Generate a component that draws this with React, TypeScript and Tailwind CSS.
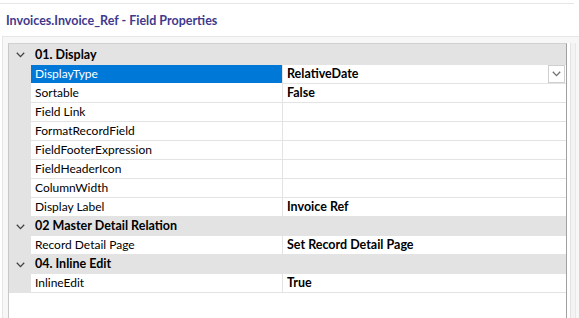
// Field properties grid for the Invoice_Ref field

const font = { fontFamily: 'Lato, "Noto Sans", sans-serif' };

type Item = { name: string; value?: string; selected?: boolean; dropdown?: boolean };
type Group = { title: string; items: Item[] };

const groups: Group[] = [
  {
    title: '01. Display',
    items: [
      { name: 'DisplayType', value: 'RelativeDate', selected: true, dropdown: true },
      { name: 'Sortable', value: 'False' },
      { name: 'Field Link' },
      { name: 'FormatRecordField' },
      { name: 'FieldFooterExpression' },
      { name: 'FieldHeaderIcon' },
      { name: 'ColumnWidth' },
      { name: 'Display Label', value: 'Invoice Ref' },
    ],
  },
  {
    title: '02 Master Detail Relation',
    items: [{ name: 'Record Detail Page', value: 'Set Record Detail Page' }],
  },
  {
    title: '04. Inline Edit',
    items: [{ name: 'InlineEdit', value: 'True' }],
  },
];

function Chevron({ className }: { className?: string }) {
  return (
    <svg width="9" height="6" viewBox="0 0 9 6" className={className}>
      <path d="M0.8 0.8 L4.5 4.6 L8.2 0.8" fill="none" stroke="currentColor" strokeWidth="1.3" />
    </svg>
  );
}

function GroupRow({ title, first }: { title: string; first?: boolean }) {
  return (
    <div className={`flex items-center bg-[#e3e3e3] ${first ? 'h-[21px] pt-[1px]' : 'h-[19px]'}`}>
      <div className="w-[22px] shrink-0 flex justify-center text-[#404040]">
        <Chevron />
      </div>
      <span className="pl-[4px] text-[12.5px] font-bold text-black leading-none">{title}</span>
    </div>
  );
}

function ItemRow({ item }: { item: Item }) {
  return (
    <div className="flex h-[19px]">
      <div className="w-[22px] shrink-0 bg-[#e3e3e3]" />
      <div
        className={`w-[251px] shrink-0 flex items-center pl-[4px] text-[12px] leading-none border-b border-[#e3e3e3] ${
          item.selected ? 'bg-[#0078d7] text-white border-b-white' : 'text-black'
        }`}
      >
        {item.name}
      </div>
      <div className="flex-1 min-w-0 flex items-center border-l border-b border-[#e3e3e3] pl-[4px] relative">
        <span className="text-[12.5px] font-bold text-black leading-none whitespace-nowrap">{item.value}</span>
        {item.dropdown && (
          <div className="absolute right-[1px] top-0 w-[17px] h-[18px] border border-[#cfcfcf] bg-white flex items-center justify-center text-[#707070]">
            <Chevron />
          </div>
        )}
      </div>
    </div>
  );
}

export default function App() {
  return (
    <div className="w-[579px] h-[318px] bg-white overflow-hidden flex flex-col" style={font}>
      <div className="h-[3px]" />
      <div className="h-[33px] border-t border-[#e6e6e6] mr-[5px] flex items-center pl-[6px] pt-[3px]">
        <span className="text-[12.5px] font-bold text-[#3f3a8c]">Invoices.Invoice_Ref - Field Properties</span>
      </div>
      <div className="flex-1 flex border-t border-[#e6e6e6] bg-[#f7f7f7] ml-[2px] border-l pt-[6px] pl-[5px]">
        <div className="w-[559px] shrink-0 border-t border-l border-r border-t-[#d0d0d0] border-l-[#c8c8c8] border-r-[#a0a0a0] bg-white">
          {groups.map((g, gi) => (
            <div key={g.title}>
              <GroupRow title={g.title} first={gi === 0} />
              {g.items.map((it) => (
                <ItemRow key={it.name} item={it} />
              ))}
            </div>
          ))}
        </div>
        <div className="flex-1 flex">
          <div className="w-[3px] bg-white" />
          <div className="w-[1px] bg-[#e2e2e2]" />
          <div className="w-[4px] bg-[#f3f3f3]" />
          <div className="w-[1px] bg-[#e8e8e8]" />
          <div className="flex-1 bg-[#f7f7f7]" />
        </div>
      </div>
    </div>
  );
}
